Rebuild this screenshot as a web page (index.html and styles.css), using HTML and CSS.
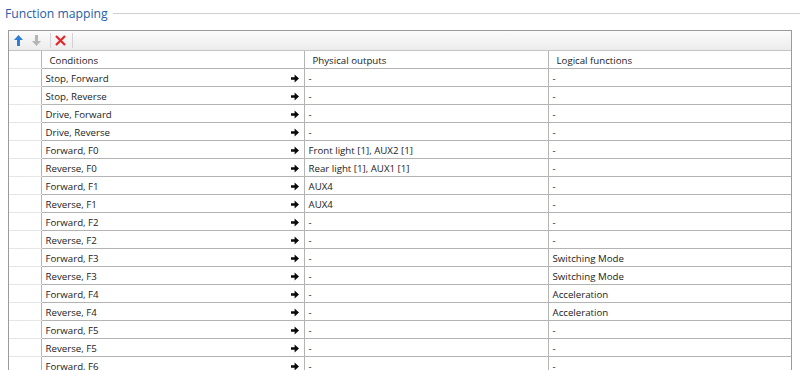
FILE: index.html
```html
<!DOCTYPE html>
<html lang="en">
<head>
    <meta charset="UTF-8">
    <title>Function mapping</title>
    <link rel="stylesheet" href="styles.css">
</head>
<body>
    <div class="group">
        <div class="group-title">
            <span>Function mapping</span>
            <div class="group-line"></div>
        </div>
        <div class="grid-box">
            <div class="toolbar">
                <span class="tool">
                    <svg width="9" height="11" viewBox="0 0 9 11"><path d="M4.5 0 L9 5 L6 5 L6 11 L3 11 L3 5 L0 5 Z" fill="#2d7fd6"/></svg>
                </span>
                <span class="tool">
                    <svg width="9" height="11" viewBox="0 0 9 11"><path d="M4.5 11 L9 6 L6 6 L6 0 L3 0 L3 6 L0 6 Z" fill="#b5b5b5"/></svg>
                </span>
                <span class="sep"></span>
                <span class="tool">
                    <svg width="11" height="11" viewBox="0 0 11 11"><path d="M1 1 L10 10 M10 1 L1 10" stroke="#e2282b" stroke-width="2.2"/></svg>
                </span>
                <span class="sep"></span>
            </div>
            <table class="map">
                <colgroup>
                    <col class="c-head">
                    <col class="c-cond">
                    <col class="c-phys">
                    <col>
                </colgroup>
                <thead>
                    <tr>
                        <th class="rh"></th>
                        <th>Conditions</th>
                        <th>Physical outputs</th>
                        <th class="last">Logical functions</th>
                    </tr>
                </thead>
                <tbody id="rows"></tbody>
            </table>
        </div>
    </div>

<script>
    const rows = [
        ['Stop, Forward', '-', '-'],
        ['Stop, Reverse', '-', '-'],
        ['Drive, Forward', '-', '-'],
        ['Drive, Reverse', '-', '-'],
        ['Forward, F0', 'Front light [1], AUX2 [1]', '-'],
        ['Reverse, F0', 'Rear light [1], AUX1 [1]', '-'],
        ['Forward, F1', 'AUX4', '-'],
        ['Reverse, F1', 'AUX4', '-'],
        ['Forward, F2', '-', '-'],
        ['Reverse, F2', '-', '-'],
        ['Forward, F3', '-', 'Switching Mode'],
        ['Reverse, F3', '-', 'Switching Mode'],
        ['Forward, F4', '-', 'Acceleration'],
        ['Reverse, F4', '-', 'Acceleration'],
        ['Forward, F5', '-', '-'],
        ['Reverse, F5', '-', '-'],
        ['Forward, F6', '-', '-']
    ];

    const arrow = '<svg class="arrow" width="8" height="9" viewBox="0 0 8 9"><path d="M0 3.3 L3.6 3.3 L3.6 0.6 L8 4.5 L3.6 8.4 L3.6 5.7 L0 5.7 Z" fill="#0a0a0a"/></svg>';

    const body = document.getElementById('rows');
    rows.forEach(r => {
        const tr = document.createElement('tr');
        tr.innerHTML =
            '<td class="rh"></td>' +
            '<td class="cond"><span>' + r[0] + '</span>' + arrow + '</td>' +
            '<td>' + r[1] + '</td>' +
            '<td class="last">' + r[2] + '</td>';
        body.appendChild(tr);
    });
</script>
</body>
</html>
```

FILE: styles.css
```css
body {
    margin: 0;
    padding: 0;
    background-color: #ffffff;
    font-family: "Open Sans", "Noto Sans", sans-serif;
    color: #1b1b1b;
    overflow: hidden;
}

.group {
    padding: 3px 0 0 5px;
}

.group-title {
    display: flex;
    align-items: center;
    height: 20px;
    color: #2660a8;
    font-size: 12.2px;
}

.group-line {
    flex: 1;
    height: 1px;
    background-color: #cfcfcf;
    margin-left: 5px;
}

.grid-box {
    margin: 7px 0 0 3px;
    width: 782px;
    border: 1px solid #9b9b9b;
    border-bottom: none;
}

.toolbar {
    height: 19px;
    display: flex;
    align-items: center;
    background: linear-gradient(#fbfbfb, #ececec);
    border-bottom: 1px solid #c4c4c4;
}

.tool {
    width: 18px;
    height: 18px;
    display: flex;
    align-items: center;
    justify-content: center;
}

.sep {
    width: 1px;
    height: 15px;
    background-color: #d3d3d3;
    margin: 0 0 0 5px;
}

.sep:last-child {
    margin-left: 3px;
}

.map {
    width: 782px;
    border-collapse: collapse;
    table-layout: fixed;
    font-size: 9.7px;
}

.c-head {
    width: 32px;
}

.c-cond {
    width: 263px;
}

.c-phys {
    width: 244px;
}

.map th,
.map td {
    height: 17px;
    padding: 2px 0 0 4px;
    border-right: 1px solid #b4b4b4;
    border-bottom: 1px solid #b4b4b4;
    text-align: left;
    font-weight: normal;
    white-space: nowrap;
    overflow: hidden;
    line-height: 15px;
    box-sizing: border-box;
    vertical-align: top;
}

.map th {
    padding-left: 8px;
    background-color: #ffffff;
}

.map .rh {
    border-bottom-color: #e6e6e6;
}

.map .last {
    border-right: none;
}

.map td.cond {
    padding-right: 5px;
}

.cond span {
    float: left;
}

.arrow {
    float: right;
    margin-top: 3px;
}
```
